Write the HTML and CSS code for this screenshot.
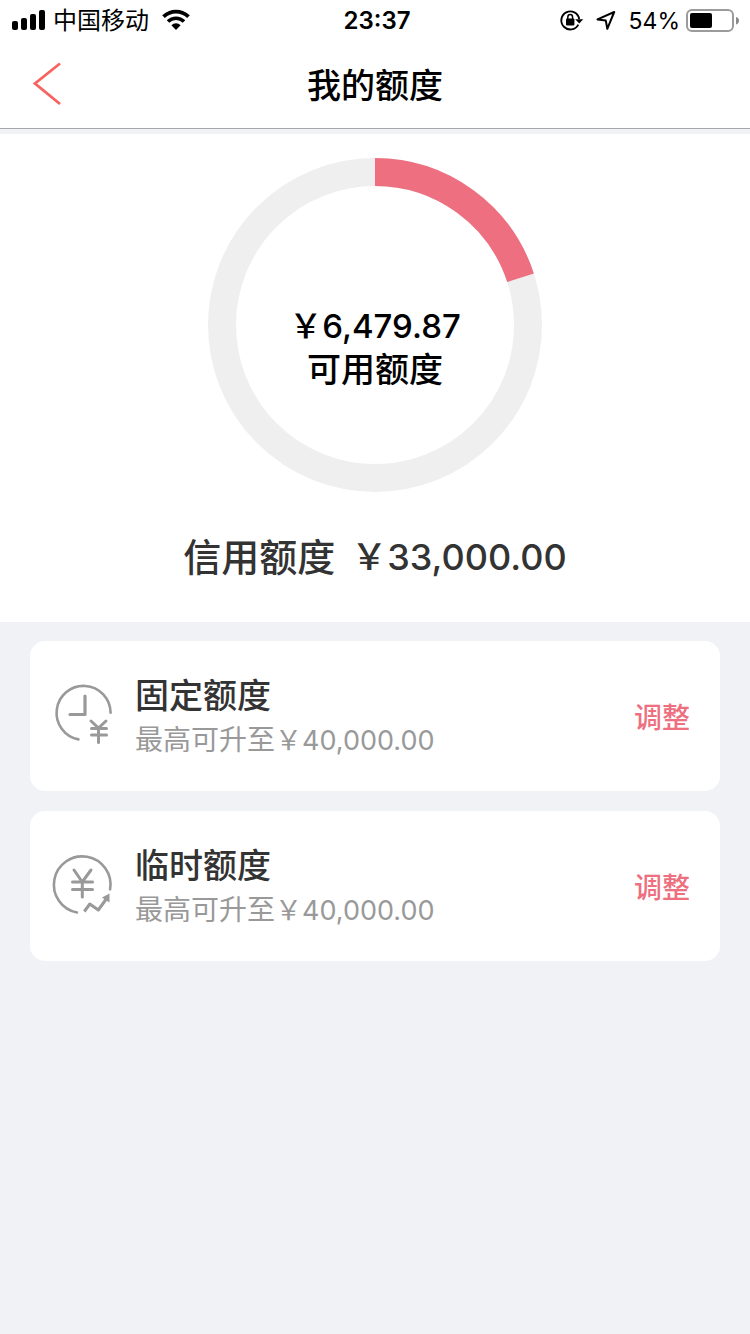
FILE: index.html
```html
<!DOCTYPE html>
<html lang="zh-CN">
<head>
<meta charset="utf-8">
<meta name="viewport" content="width=device-width, initial-scale=1">
<title>我的额度</title>
<link rel="stylesheet" href="styles.css">
</head>
<body>
<div class="status">
  <div class="status-side">
    <svg class="signal" width="34" height="20" viewBox="0 0 34 20" aria-hidden="true">
      <rect x="0" y="11" width="6" height="9" rx="2"/>
      <rect x="9" y="8" width="6" height="12" rx="2"/>
      <rect x="18" y="4" width="6" height="16" rx="2"/>
      <rect x="27" y="0" width="6" height="20" rx="2"/>
    </svg>
    <span class="carrier">中国移动</span>
    <svg class="wifi" width="28" height="20" viewBox="0 0 28 20" aria-hidden="true">
      <path d="M1.5 6.600A18 18 0 0 1 26.5 6.600" fill="none" stroke="#000" stroke-width="3.8"/>
      <path d="M6 11.500A11.3 11.3 0 0 1 22 11.500" fill="none" stroke="#000" stroke-width="3.6"/>
      <path d="M9.400 15.2A6.4 6.4 0 0 1 18.600 15.2L14 20z"/>
    </svg>
  </div>
  <time class="clock">23:37</time>
  <div class="status-side status-end">
    <svg class="lock" width="24" height="20" viewBox="0 0 24 20" aria-hidden="true">
      <path d="M18.3 14.6A9 9 0 1 1 19.2 9" fill="none" stroke="#000" stroke-width="1.9"/>
      <path d="M15.2 9.2h8L19.2 13.6z"/>
      <rect x="6" y="8.500" width="8.4" height="7" rx="1"/>
      <path d="M7.8 9.2V7.2a2.4 2.6 0 0 1 4.8 0v2" fill="none" stroke="#000" stroke-width="1.5"/>
    </svg>
    <svg class="locate" width="20" height="20" viewBox="0 0 20 20" aria-hidden="true">
      <path d="M18.200 2L11.3 18.800 9.8 10.6 1.500 9.4z" fill="none" stroke="#000" stroke-width="2" stroke-linejoin="round"/>
    </svg>
    <span class="percent">54%</span>
    <svg class="battery" width="53" height="24" viewBox="0 0 53 24" aria-hidden="true">
      <rect x="1" y="2" width="46" height="21" rx="5" fill="none" stroke="#9b9b9b" stroke-width="2"/>
      <rect x="4" y="5" width="22" height="15" rx="2"/>
      <path d="M50 9Q53 9.500 53 12.500T50 16.500z" fill="#8a8a8a"/>
    </svg>
  </div>
</div>

<header class="nav">
  <button class="back" type="button" aria-label="返回">
    <svg width="28" height="42" viewBox="0 0 28 42" aria-hidden="true">
      <path d="M27 0.500L2 20.500L27 41" fill="none" stroke="#f8625f" stroke-width="2.800"/>
    </svg>
  </button>
  <h1 class="nav-title">我的额度</h1>
</header>

<main>
  <section class="summary">
    <div class="gauge">
      <svg class="ring" viewBox="0 0 334 334" aria-hidden="true">
        <circle cx="167" cy="167" r="153" fill="none" stroke="#efefef" stroke-width="28"/>
        <circle cx="167" cy="167" r="153" fill="none" stroke="#ed6f80" stroke-width="28" pathLength="100" stroke-dasharray="20 80" transform="rotate(-90 167 167)"/>
      </svg>
      <p class="gauge-text"><span class="gauge-amount">￥6,479.87</span><span>可用额度</span></p>
    </div>
    <p class="credit"><span>信用额度</span><span class="credit-amount">￥33,000.00</span></p>
  </section>

  <section class="cards">
    <article class="card">
      <svg class="card-icon" width="60" height="60" viewBox="0 0 60 60" aria-hidden="true">
        <g fill="none" stroke="#999" stroke-linecap="round">
          <path d="M57.600 27.800A27 27 0 1 0 25.400 54.400" stroke-width="2.600"/>
          <path d="M32 11V29.500H17" stroke-width="3.200" stroke-linejoin="round"/>
          <path d="M38 36L45.500 43L53 36M45.500 43V57.500M38.500 43.500H53.500M38.500 50H53.500" stroke-width="3"/>
        </g>
      </svg>
      <div class="card-body">
        <h2 class="card-title">固定额度</h2>
        <p class="card-note">最高可升至<span class="note-amount">￥40,000.00</span></p>
      </div>
      <button class="adjust" type="button">调整</button>
    </article>
    <article class="card">
      <svg class="card-icon" width="60" height="60" viewBox="0 0 60 60" aria-hidden="true">
        <g fill="none" stroke="#999">
          <path d="M57.100 34.400A28.300 28.300 0 1 0 24 57.500" stroke-width="2.600" stroke-linecap="round"/>
          <path d="M21 15L29.300 27L38 15M29.300 26V42M19.500 27H39.500M19.500 34.500H39.500" stroke-width="3" stroke-linecap="round"/>
          <path d="M31.300 56.500L36.800 49L45.300 55L54 43" stroke-width="3" stroke-linejoin="round"/>
        </g>
        <path d="M56.500 38.500V47.500L49 42.500z" fill="#999"/>
      </svg>
      <div class="card-body">
        <h2 class="card-title">临时额度</h2>
        <p class="card-note">最高可升至<span class="note-amount">￥40,000.00</span></p>
      </div>
      <button class="adjust" type="button">调整</button>
    </article>
  </section>
</main>
</body>
</html>
```
FILE: styles.css
```css
* {
  box-sizing: border-box;
}

body {
  margin: 0;
  min-height: 100vh;
  background: #f0f2f6;
  color: #000;
  font-family: Inter, "Noto Sans CJK SC", sans-serif;
}

h1, h2, p {
  margin: 0;
  font-weight: 500;
}

button {
  padding: 0;
  border: 0;
  background: none;
  font: inherit;
  cursor: pointer;
}

svg {
  display: block;
  flex: none;
  overflow: visible;
}

.status {
  display: grid;
  grid-template-columns: 1fr auto 1fr;
  align-items: center;
  height: 40px;
  padding: 0 11px 0 12px;
  background: #fff;
  font-size: 24px;
  line-height: 36px;
}

.status-side {
  display: flex;
  align-items: center;
}

.status-end {
  justify-content: flex-end;
}

.carrier,
.clock,
.percent {
  padding-top: 2px;
}

.carrier {
  margin: 0 13px 0 7px;
}

.clock {
  padding-left: 3px;
  font-weight: 600;
}

.locate {
  margin: 0 13px 0 12px;
}

.percent {
  margin-right: 6px;
  font-size: 23px;
}

.nav {
  display: grid;
  grid-template-columns: 1fr auto 1fr;
  align-items: center;
  height: 89px;
  padding: 0 33px;
  border-bottom: 1px solid #a6a7aa;
  background: #fff;
}

.back {
  justify-self: start;
}

.nav-title {
  padding-top: 3px;
  font-size: 34px;
  line-height: 48px;
}

.summary {
  margin-top: 5px;
  padding: 24px 30px 36px;
  background: #fff;
}

.gauge {
  display: grid;
  place-items: center;
  width: 334px;
  margin: 0 auto;
}

.ring,
.gauge-text {
  grid-area: 1 / 1;
}

.ring {
  width: 100%;
}

.gauge-text {
  display: grid;
  justify-items: center;
  padding-top: 45px;
  font-size: 34px;
  line-height: 44px;
}

.gauge-amount {
  font-size: 33px;
}

.credit {
  display: flex;
  justify-content: center;
  gap: 16px;
  margin-top: 36px;
  color: #333;
  font-size: 38px;
  line-height: 58px;
}

.credit-amount {
  font-size: 36px;
}

.cards {
  display: grid;
  gap: 20px;
  padding: 19px 30px;
}

.card {
  display: flex;
  align-items: center;
  gap: 22px;
  min-height: 150px;
  padding: 0 30px 0 23px;
  border-radius: 15px;
  background: #fff;
}

.card-icon {
  margin-bottom: 2px;
}

.card-body {
  flex: 1;
  padding-top: 4px;
}

.card-title {
  color: #333;
  font-size: 34px;
  line-height: 44px;
}

.card-note {
  color: #999;
  font-size: 28px;
  font-weight: 400;
  line-height: 44px;
}

.note-amount {
  font-size: 27px;
}

.adjust {
  padding-top: 3px;
  color: #ed6f80;
  font-size: 28px;
  font-weight: 500;
  line-height: 44px;
}
```
